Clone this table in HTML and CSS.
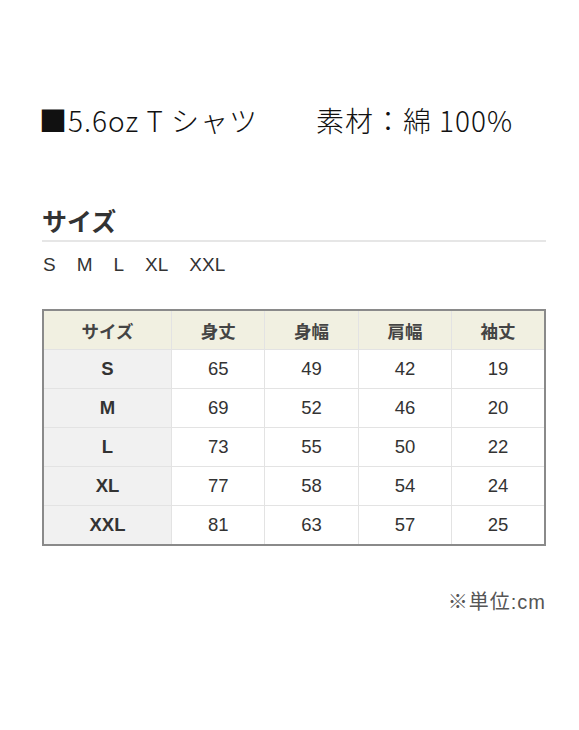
FILE: index.html
```html
<!DOCTYPE html>
<html lang="ja">
<head>
<meta charset="utf-8">
<link rel="stylesheet" href="styles.css">
</head>
<body>
<div class="page">
  <h1 class="title">■5.6oz T シャツ　　素材：綿 100%</h1>
  <h2 class="heading">サイズ</h2>
  <p class="sizes">S<span class="sp"></span>M<span class="sp"></span>L<span class="sp"></span>XL<span class="sp"></span>XXL</p>
  <table class="spec">
    <thead>
      <tr><th class="c0">サイズ</th><th>身丈</th><th>身幅</th><th>肩幅</th><th>袖丈</th></tr>
    </thead>
    <tbody>
      <tr><th>S</th><td>65</td><td>49</td><td>42</td><td>19</td></tr>
      <tr><th>M</th><td>69</td><td>52</td><td>46</td><td>20</td></tr>
      <tr><th>L</th><td>73</td><td>55</td><td>50</td><td>22</td></tr>
      <tr><th>XL</th><td>77</td><td>58</td><td>54</td><td>24</td></tr>
      <tr><th>XXL</th><td>81</td><td>63</td><td>57</td><td>25</td></tr>
    </tbody>
  </table>
  <p class="note">※単位:cm</p>
</div>
</body>
</html>
```
FILE: styles.css
```css
html, body {
  margin: 0;
  padding: 0;
  background: #fff;
}
.page {
  width: 504px;
  margin-left: 42px;
  padding-top: 102px;
  font-family: "Liberation Sans", "Noto Sans CJK JP", sans-serif;
  color: #333;
}
.title {
  margin: 0 0 0 -3px;
  font-family: "Noto Sans CJK JP", sans-serif;
  font-weight: 300;
  font-size: 28px;
  letter-spacing: 1px;
  line-height: 36px;
  color: #111;
  white-space: nowrap;
}
.heading {
  margin: 66px 0 0 0;
  font-family: "Noto Sans CJK JP", sans-serif;
  font-weight: 700;
  font-size: 25px;
  line-height: 32px;
  padding-bottom: 4px;
  border-bottom: 2px solid #e6e6e6;
  color: #333;
}
.sizes {
  margin: 10px 0 0 1px;
  font-size: 19px;
  line-height: 26px;
  color: #333;
}
.sp {
  display: inline-block;
  width: 21px;
}
.spec {
  margin-top: 31px;
  width: 504px;
  border-collapse: collapse;
  border: 2px solid #8a8a8a;
  table-layout: fixed;
}
.spec th, .spec td {
  border: 1px solid #e3e3e3;
  height: 38px;
  padding: 0;
  text-align: center;
  font-size: 18.5px;
  color: #333;
}
.spec thead th {
  background: #f1f0e1;
  font-family: "Noto Sans CJK JP", sans-serif;
  font-weight: 700;
  font-size: 17.5px;
  color: #444;
}
.spec .c0 {
  width: 127px;
}
.spec tbody th {
  background: #f1f1f1;
  font-weight: 700;
}
.note {
  margin: 40px 0 0 0;
  text-align: right;
  font-family: "Liberation Sans", "Noto Sans CJK JP", sans-serif;
  font-size: 20px;
  letter-spacing: 1px;
  color: #555;
}
```
